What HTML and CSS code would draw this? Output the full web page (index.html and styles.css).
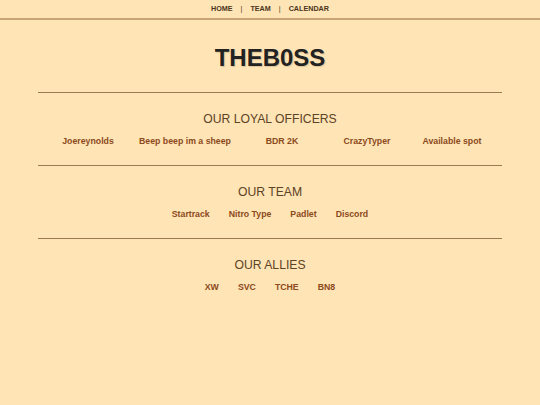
FILE: index.html
```html
<!DOCTYPE html>
<html>
<head>
<meta charset="utf-8">
<link rel="stylesheet" href="styles.css">
</head>
<body>
<nav class="topnav">
  <a class="navlink" href="#">HOME</a>
  <span class="sep">|</span>
  <a class="navlink" href="#">TEAM</a>
  <span class="sep">|</span>
  <a class="navlink" href="#">CALENDAR</a>
</nav>
<main class="page">
  <h1 class="title">THEB0SS</h1>
  <section class="block">
    <h2 class="heading">OUR LOYAL OFFICERS</h2>
    <div class="links officers">
      <a class="link" href="#">Joereynolds</a>
      <a class="link" href="#">Beep beep im a sheep</a>
      <a class="link" href="#">BDR 2K</a>
      <a class="link" href="#">CrazyTyper</a>
      <a class="link" href="#">Available spot</a>
    </div>
  </section>
  <section class="block">
    <h2 class="heading">OUR TEAM</h2>
    <div class="links">
      <a class="link" href="#">Startrack</a>
      <a class="link" href="#">Nitro Type</a>
      <a class="link" href="#">Padlet</a>
      <a class="link" href="#">Discord</a>
    </div>
  </section>
  <section class="block">
    <h2 class="heading">OUR ALLIES</h2>
    <div class="links">
      <a class="link" href="#">XW</a>
      <a class="link" href="#">SVC</a>
      <a class="link" href="#">TCHE</a>
      <a class="link" href="#">BN8</a>
    </div>
  </section>
</main>
</body>
</html>
```

FILE: styles.css
```css
html, body {
  margin: 0;
  padding: 0;
  background: #ffe4b5;
  font-family: "Liberation Sans", Arial, sans-serif;
}

.topnav {
  height: 18px;
  border-bottom: 2px solid #c8a574;
  display: flex;
  justify-content: center;
  align-items: center;
  gap: 8px;
  font-size: 7.2px;
  line-height: 18px;
  font-weight: bold;
}

.navlink {
  color: #4a3520;
  text-decoration: none;
}

.sep {
  color: #4a3520;
  font-weight: normal;
}

.page {
  margin: 0 38px;
}

.title {
  margin: 26px 0 22px;
  font-size: 24px;
  line-height: 24px;
  font-weight: bold;
  text-align: center;
  color: #222222;
  text-shadow: 1px 1px 1px rgba(0, 0, 0, 0.15);
}

.block {
  border-top: 1px solid #9b7a52;
  padding: 20px 0 19px;
  text-align: center;
}

.heading {
  margin: 0;
  font-size: 12.2px;
  line-height: 12px;
  font-weight: normal;
  color: #5c4326;
}

.links {
  margin-top: 12px;
  display: flex;
  justify-content: center;
  gap: 19px;
  font-size: 8.75px;
  line-height: 9px;
  font-weight: bold;
}

.link {
  color: #8b4a1c;
  text-decoration: none;
}

.officers {
  gap: 17px;
}

.officers .link {
  min-width: 68px;
  text-align: center;
}
```
